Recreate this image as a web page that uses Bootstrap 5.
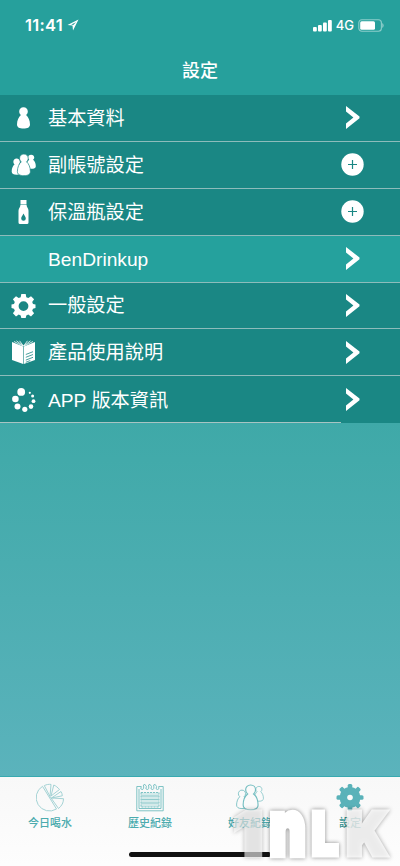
<!DOCTYPE html>
<html lang="zh-Hant">
<head>
<meta charset="utf-8">
<meta name="viewport" content="width=device-width, initial-scale=1">
<title>設定</title>
<link href="https://cdn.jsdelivr.net/npm/bootstrap@5.3.0/dist/css/bootstrap.min.css" rel="stylesheet">
<style>
  body { font-family: "Liberation Sans", "Noto Sans CJK TC", sans-serif; background: #fafafa; }
  .screen { width: 400px; height: 866px; }
  .top-area { background: #26a09c; height: 95px; }
  .status-line { height: 50px; padding: 0 16px 0 25px; font-family: Inter, sans-serif; }
  .clock { font-size: 16.5px; font-weight: 600; letter-spacing: .25px; line-height: 50px; }
  .network { font-size: 13px; font-weight: 500; line-height: 50px; }
  .page-title { font-size: 18px; font-weight: 500; line-height: 38px; font-family: "Noto Sans CJK TC", sans-serif; }
  .settings .list-group-item { height: 46.9px; padding: 0 36px 0 11px; border: 0; border-bottom: 1px solid #8dbcbb; font-size: 19.2px; line-height: 1; background: #1a8784; color: #fff; }
  .settings .list-group-item.device { background: #25a19d; }
  .settings .list-group-item.last-row { border-bottom: 0; background: linear-gradient(#a8c4c3, #a8c4c3) 0 100% / 341px 1px no-repeat #1a8784; }
  .row-label { margin-left: 12px; padding-top: 1px; }
  .body-area { background: linear-gradient(#3fa9a8, #5bb3bc); border-bottom: 1px solid #38a9b0; }
  .tab-area { height: 89px; background: linear-gradient(#f8f8f8, #fdfdfd); }
  .tab-item { font-family: "Noto Sans CJK TC", sans-serif; font-size: 11px; font-weight: 500; line-height: 16px; color: #4babae; padding-top: 6px; }
  .tab-item.current { color: #2d8f8e; }
  .tab-item svg { display: block; margin-bottom: 2px; }
  .home-bar { width: 142px; height: 5px; bottom: 9px; left: 129px; background: #111; }
  .watermark { left: 228px; bottom: 0; filter: drop-shadow(0 0 2px rgba(0,0,0,.45)); }
</style>
<script src="https://cdn.jsdelivr.net/npm/bootstrap@5.3.0/dist/js/bootstrap.bundle.min.js"></script>
</head>
<body>
<svg width="0" height="0" class="position-absolute" aria-hidden="true">
  <defs>
    <path id="person" d="M12 1.300c2.600 0 4.300 1.900 4.300 4.100 0 1.500-.6 2.700-1.700 3.500 2.200 1.700 3.900 5.500 3.900 9.500 0 2.900-2.500 4.100-6.500 4.100s-6.500-1.200-6.500-4.100c0-4 1.700-7.800 3.900-9.500-1.100-.8-1.700-2-1.700-3.500 0-2.200 1.700-4.100 4.300-4.100z"/>
    <path id="gear" fill-rule="evenodd" d="M9.800 0h4.400l.6 3.300 2 .8 2.700-1.900 3.100 3.100-1.900 2.700.8 2 2.500.4v3.600l-2.500.7-.8 2 1.900 2.600-3.100 3.100-2.700-1.800-2 .8-.6 2.600H9.800l-.6-2.600-2-.8-2.700 1.800-3.100-3.100 1.900-2.600-.8-2L0 14v-3.600l2.500-.4.8-2-1.900-2.700 3.100-3.100 2.700 1.900 2-.8zM12 7.200a4.900 4.900 0 1 0 0 9.800 4.900 4.900 0 0 0 0-9.800z"/>
    <path id="arrow" d="M0 0l13.500 10.500v1.800L0 23v-5.500l7.400-6L0 5.500z"/>
  </defs>
</svg>
<main class="screen position-relative overflow-hidden d-flex flex-column">
  <header class="top-area text-white flex-shrink-0">
    <div class="status-line d-flex align-items-center">
      <span class="clock">11:41</span>
      <svg class="ms-1" width="12" height="12" viewBox="0 0 12 12" fill="#fff"><path d="M11.500.5L.5 6l5 .4.5 5.100z"/><path d="M9 3.200L4.200 5.600l2.100.3z" fill="#26a09c"/></svg>
      <svg class="ms-auto" width="19" height="13" viewBox="0 0 19 13" fill="#fff"><rect y="8" width="3.800" height="4.500" rx="1"/><rect x="5" y="6" width="3.800" height="6.500" rx="1"/><rect x="10" y="3.500" width="3.800" height="9" rx="1"/><rect x="15" y="1" width="3.800" height="11.500" rx="1"/></svg>
      <span class="network ms-1">4G</span>
      <svg class="ms-1" width="26" height="13" viewBox="0 0 26 13"><rect x=".8" y=".8" width="22.600" height="11.400" rx="3" fill="none" stroke="#8ccdca" stroke-width="1.100"/><rect x="2.200" y="2.200" width="14.800" height="8.600" rx="1.500" fill="#fff"/><path d="M24.600 4.500q1.500 2 0 4z" fill="#8ccdca" stroke="#8ccdca" stroke-width=".6"/></svg>
    </div>
    <h1 class="page-title text-center m-0">設定</h1>
  </header>

  <nav class="settings list-group list-group-flush flex-shrink-0">
    <a href="#" class="list-group-item d-flex align-items-center">
      <svg width="25" height="24" viewBox="0 0 24 24" fill="#fff"><use href="#person"/></svg><span class="row-label">基本資料</span>
      <svg class="ms-auto me-1" width="14" height="23" fill="#fff"><use href="#arrow"/></svg>
    </a>
    <a href="#" class="list-group-item d-flex align-items-center">
      <svg width="25" height="24" viewBox="0 0 24 24" fill="#fff"><use href="#person" transform="translate(-4 4.600) scale(.76 .76)"/><use href="#person" transform="translate(11 1) scale(.72 .66)"/><use href="#person" transform="translate(.4 -.3) scale(1 1.020)" stroke="#1a8784" stroke-width=".7"/></svg><span class="row-label">副帳號設定</span>
      <svg class="ms-auto" width="23" height="23" viewBox="0 0 23 23"><circle cx="11.500" cy="11.500" r="11.200" fill="#fff"/><path d="M7 11.500h9M11.500 7v9" stroke="#1a8784" stroke-width="1.200"/></svg>
    </a>
    <a href="#" class="list-group-item d-flex align-items-center">
      <svg width="25" height="24" viewBox="0 0 24 24" fill="#fff"><path d="M9 0h6v4H9zM9 4.500h6c0 3 2 3.500 2 6.200v11.800q0 1.500-1.500 1.500h-7Q7 24 7 22.500V10.700c0-2.700 2-3.200 2-6.200z"/><path d="M12 13.500c1 2.200 2.300 3.300 2.300 5a2.300 2.300 0 0 1-4.600 0c0-1.700 1.300-2.800 2.300-5z" fill="#1a8784"/></svg><span class="row-label">保溫瓶設定</span>
      <svg class="ms-auto" width="23" height="23" viewBox="0 0 23 23"><circle cx="11.500" cy="11.500" r="11.200" fill="#fff"/><path d="M7 11.500h9M11.500 7v9" stroke="#1a8784" stroke-width="1.200"/></svg>
    </a>
    <a href="#" class="list-group-item device d-flex align-items-center">
      <svg width="25" height="24"></svg><span class="row-label">BenDrinkup</span>
      <svg class="ms-auto me-1" width="14" height="23" fill="#fff"><use href="#arrow"/></svg>
    </a>
    <a href="#" class="list-group-item d-flex align-items-center">
      <svg width="25" height="24" viewBox="0 0 24 24" fill="#fff"><use href="#gear"/></svg><span class="row-label">一般設定</span>
      <svg class="ms-auto me-1" width="14" height="23" fill="#fff"><use href="#arrow"/></svg>
    </a>
    <a href="#" class="list-group-item d-flex align-items-center">
      <svg width="25" height="24" viewBox="0 0 24 24"><path d="M.5 2L11.700 6.500V24L.5 20zM23.500 2L12.300 6.500V24l11.200-4z" fill="#fff"/><path d="M2.500 1.500L11.500 6M5 .8L11.700 6M8 .8L12 6M21.500 1.500L12.500 6M19 .8L12.300 6M16 .8L12 6" stroke="#fff" stroke-width=".8"/><path d="M14.300 14.500l7.200-2.800M14.300 17.300l7.200-2.800M14.300 20.100l7.200-2.800M14.300 22.300l4.500-1.800" stroke="#1a8784" stroke-width=".8"/></svg><span class="row-label">產品使用說明</span>
      <svg class="ms-auto me-1" width="14" height="23" fill="#fff"><use href="#arrow"/></svg>
    </a>
    <a href="#" class="list-group-item last-row d-flex align-items-center">
      <svg width="25" height="24" viewBox="0 0 25 24" fill="#fff"><circle cx="10.200" cy="3.900" r="3.900"/><circle cx="4.400" cy="11" r="3.300"/><circle cx="6.500" cy="18.500" r="3"/><circle cx="13.800" cy="21.300" r="2.600"/><circle cx="20" cy="18.600" r="2.300"/><circle cx="22.500" cy="13.200" r="1.900"/><circle cx="21.600" cy="8" r="1.500"/><circle cx="18.800" cy="4.800" r="1.100"/></svg><span class="row-label">APP 版本資訊</span>
      <svg class="ms-auto me-1" width="14" height="23" fill="#fff"><use href="#arrow"/></svg>
    </a>
  </nav>

  <div class="body-area flex-grow-1"></div>

  <footer class="tab-area flex-shrink-0 d-flex">
    <a href="#" class="tab-item col-3 d-flex flex-column align-items-center text-decoration-none">
      <svg width="28" height="29" viewBox="0 0 28 29" fill="none" stroke="#9bced0" stroke-width=".9"><path d="M6.500 3.300A13 13 0 1 0 20.500 26z"/><path d="M8.300 2.600L14 13.500 22.500 25.500c3.500-2.800 5-6 5-9.800L15.500 15M8.300 2.600c2-1 4.500-1.500 6.700-1.200L14 13.500M17.800 2L15 13l8.500-6.500C21.800 4.500 20 3 17.800 2zM25 8.500L15.500 15l10.800-2.200c0-1.500-.5-3-1.300-4.300z"/></svg>
      <span>今日喝水</span>
    </a>
    <a href="#" class="tab-item col-3 d-flex flex-column align-items-center text-decoration-none">
      <svg width="28" height="29" viewBox="0 0 28 29" fill="none" stroke="#72bdc0" stroke-width=".9"><path d="M.8 3.500h4.500q-1.500 3 .8 3t1.300-4.500q1.500-2 3 1.500-1.500 3 .8 3t1.300-4.500q1.500-2 3 1.500-1.500 3 .8 3t1.300-4.500q1.500-2 3 1.500-1.500 3 .8 3t1.300-3h4.500v24.300H.8z"/><path d="M3 6v19.500h22V6"/><path d="M5 9.500h18v14.500H5z" fill="#d4eaea" stroke-dasharray="2 1"/><path d="M5.500 13h17M5.500 16.500h17M5.500 20h17" stroke-width=".7"/></svg>
      <span>歷史紀錄</span>
    </a>
    <a href="#" class="tab-item col-3 d-flex flex-column align-items-center text-decoration-none">
      <svg width="28" height="29" viewBox="0 0 28 29" fill="#fafafa" stroke="#72bdc0" stroke-width="1"><use href="#person" transform="translate(-4 6) scale(.83 .87)"/><use href="#person" transform="translate(14.500 2.500) scale(.7 .7)"/><use href="#person" transform="translate(.8 .5) scale(1.150 1.170)"/></svg>
      <span>好友紀錄</span>
    </a>
    <a href="#" class="tab-item current col-3 d-flex flex-column align-items-center text-decoration-none">
      <svg width="28" height="29" viewBox="0 0 28 29"><g fill="#5ab2b9"><circle cx="14" cy="14.500" r="10.500"/><rect x="11.700" y="1" width="4.600" height="27" rx="1.500"/><rect x="11.700" y="1" width="4.600" height="27" rx="1.500" transform="rotate(45 14 14.500)"/><rect x="11.700" y="1" width="4.600" height="27" rx="1.500" transform="rotate(90 14 14.500)"/><rect x="11.700" y="1" width="4.600" height="27" rx="1.500" transform="rotate(135 14 14.500)"/></g><circle cx="14" cy="14.500" r="2.800" fill="#fafafa"/></svg>
      <span>設定</span>
    </a>
  </footer>

  <div class="home-bar position-absolute rounded-pill"></div>
  <svg class="watermark position-absolute" width="172" height="66" viewBox="0 0 172 66" fill="#fff" stroke="#fff" font-family="Inter, sans-serif" font-weight="900" font-size="60" stroke-width="5">
    <text transform="translate(6 54.500) scale(1.050 .990)" opacity=".6">1</text>
    <text transform="translate(41.500 54.500) scale(.930 1.260)">n</text>
    <text transform="translate(83.500 54.500) scale(.790 .990)">L</text>
    <text transform="translate(118.500 54.500) scale(.900 .990)" opacity=".78">K</text>
  </svg>
</main>
</body>
</html>
